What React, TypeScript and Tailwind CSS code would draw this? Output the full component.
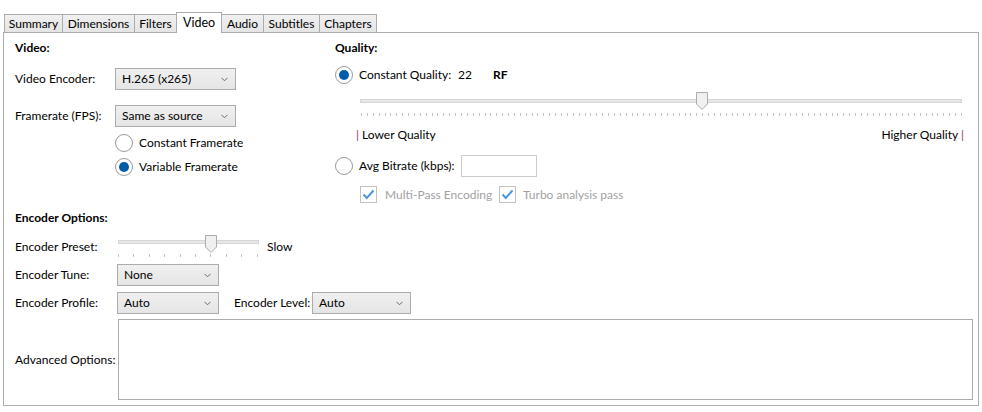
import React from 'react'

const tabs = [
  { name: 'Summary', w: 'w-[59px]' },
  { name: 'Dimensions', w: 'w-[73px]' },
  { name: 'Filters', w: 'w-[43px]' },
  { name: 'Video', w: 'w-[46px]', active: true },
  { name: 'Audio', w: 'w-[43px]' },
  { name: 'Subtitles', w: 'w-[57px]' },
  { name: 'Chapters', w: 'w-[58px]' },
]

function Chevron() {
  return (
    <svg width="7" height="5" viewBox="0 0 7 5" className="shrink-0">
      <path d="M0.5 0.8 L3.5 3.8 L6.5 0.8" stroke="#6b6b6b" strokeWidth="1" fill="none" />
    </svg>
  )
}

function Select({ value, w }: { value: string; w: string }) {
  return (
    <div className={`${w} h-[22px] flex items-center justify-between pl-[6px] pr-[7px] border border-[#acacac] bg-gradient-to-b from-[#f0f0f0] to-[#e5e5e5]`}>
      <span>{value}</span>
      <Chevron />
    </div>
  )
}

function Radio({ checked }: { checked?: boolean }) {
  return (
    <div className="w-[18px] h-[18px] rounded-full border border-[#9a9a9a] bg-white flex items-center justify-center shrink-0">
      {checked && <div className="w-[10px] h-[10px] rounded-full bg-[#005ba8]" />}
    </div>
  )
}

function Check() {
  return (
    <div className="w-[17px] h-[17px] border border-[#c2c2c2] bg-white flex items-center justify-center shrink-0">
      <svg width="13" height="11" viewBox="0 0 13 11">
        <path d="M1.5 5.5 L4.8 9 L11.5 1.5" stroke="#4d97db" strokeWidth="2" fill="none" />
      </svg>
    </div>
  )
}

function QualitySlider() {
  // 103 ticks across 600px, inverted RF scale (0..51 in half steps)
  const ticks = Array.from({ length: 103 }, (_, i) => 3 + (i * 600) / 102)
  return (
    <svg width="606" height="28" className="block">
      <rect x="2.5" y="9.5" width="601" height="3" fill="#e7e7e7" stroke="#d6d6d6" />
      {ticks.map((x, i) => (
        <rect key={i} x={Math.round(x)} y="23" width="1" height="3" fill="#c4c4c4" />
      ))}
      <path d="M338.5 2.5 H349.5 V14 L344 19.5 L338.5 14 Z" fill="#f0f0f0" stroke="#acacac" />
    </svg>
  )
}

function PresetSlider() {
  const ticks = Array.from({ length: 10 }, (_, i) => 1 + i * 15.4)
  return (
    <svg width="145" height="28" className="block">
      <rect x="1.5" y="8.5" width="140" height="3" fill="#e7e7e7" stroke="#d6d6d6" />
      {ticks.map((x, i) => (
        <rect key={i} x={Math.round(x)} y="22" width="1" height="3" fill="#c4c4c4" />
      ))}
      <path d="M88.5 3.5 H99.5 V15 L94 20.5 L88.5 15 Z" fill="#f0f0f0" stroke="#acacac" />
    </svg>
  )
}

export default function App() {
  return (
    <div className="w-[982px] h-[412px] bg-white font-['Lato','Liberation_Sans',sans-serif] text-[12px] leading-[16px] text-black">
      {/* Tabs */}
      <div className="flex items-end h-[32px] pl-[4px]">
        {tabs.map((t, i) =>
          t.active ? (
            <div key={t.name} className={`${t.w} h-[21px] -mb-px -ml-px relative z-10 bg-white border border-b-0 border-[#acacac] flex items-center justify-center text-[12.5px]`}>
              {t.name}
            </div>
          ) : (
            <div key={t.name} className={`${t.w} h-[18px] ${i > 0 ? '-ml-px' : ''} border border-b-0 border-[#acacac] bg-gradient-to-b from-[#f0f0f0] to-[#e5e5e5] flex items-center justify-center`}>
              {t.name}
            </div>
          )
        )}
      </div>

      {/* Panel */}
      <div className="mx-[3px] h-[374px] border border-[#acacac] pl-[11px] pt-[7px]">
        <div className="flex items-start">
          {/* Video */}
          <div className="w-[320px] shrink-0">
            <div className="h-[16px] font-bold">Video:</div>
            <div className="flex items-center h-[22px] mt-[12px]">
              <div className="w-[100px]">Video Encoder:</div>
              <Select value="H.265 (x265)" w="w-[121px]" />
            </div>
            <div className="flex items-center h-[22px] mt-[15px]">
              <div className="w-[100px]">Framerate (FPS):</div>
              <Select value="Same as source" w="w-[121px]" />
            </div>
            <div className="flex items-center gap-[6px] h-[18px] mt-[7px] ml-[100px]">
              <Radio />
              <span>Constant Framerate</span>
            </div>
            <div className="flex items-center gap-[6px] h-[18px] mt-[6px] ml-[100px]">
              <Radio checked />
              <span>Variable Framerate</span>
            </div>
          </div>

          {/* Quality */}
          <div className="flex-1 pr-[14px]">
            <div className="h-[16px] font-bold">Quality:</div>
            <div className="flex items-center h-[18px] mt-[10px]">
              <Radio checked />
              <span className="ml-[6px] w-[99px]">Constant Quality:</span>
              <span className="w-[35px]">22</span>
              <span className="font-bold">RF</span>
            </div>
            <div className="mt-[6px] ml-[23px]">
              <QualitySlider />
            </div>
            <div className="flex justify-between h-[16px] mt-[9px] ml-[21px]">
              <span><span className="text-[#a3336d]">|</span> Lower Quality</span>
              <span>Higher Quality <span className="text-[#a3336d]">|</span></span>
            </div>
            <div className="flex items-center h-[22px] mt-[12px]">
              <Radio />
              <span className="ml-[6px] w-[102px]">Avg Bitrate (kbps):</span>
              <div className="w-[76px] h-[22px] border border-[#cccccc] bg-white" />
            </div>
            <div className="flex items-center h-[17px] mt-[9px] ml-[25px] text-[#a2a2a2]">
              <Check />
              <span className="ml-[8px] w-[114px]">Multi-Pass Encoding</span>
              <Check />
              <span className="ml-[7px]">Turbo analysis pass</span>
            </div>
          </div>
        </div>

        {/* Encoder Options */}
        <div className="h-[16px] font-bold mt-[7px]">Encoder Options:</div>
        <div className="flex items-start h-[28px] mt-[6px]">
          <div className="w-[102px] mt-[7px]">Encoder Preset:</div>
          <PresetSlider />
          <span className="ml-[5px] mt-[7px]">Slow</span>
        </div>
        <div className="flex items-center h-[22px] mt-[4px]">
          <div className="w-[102px]">Encoder Tune:</div>
          <Select value="None" w="w-[102px]" />
        </div>
        <div className="flex items-center h-[22px] mt-[6px]">
          <div className="w-[102px]">Encoder Profile:</div>
          <Select value="Auto" w="w-[102px]" />
          <div className="ml-[15px] w-[78px]">Encoder Level:</div>
          <Select value="Auto" w="w-[99px]" />
        </div>
        <div className="flex items-center mt-[5px]">
          <div className="w-[103px] whitespace-nowrap">Advanced Options:</div>
          <div className="w-[855px] h-[81px] border border-[#acacac] bg-white" />
        </div>
      </div>
    </div>
  )
}
